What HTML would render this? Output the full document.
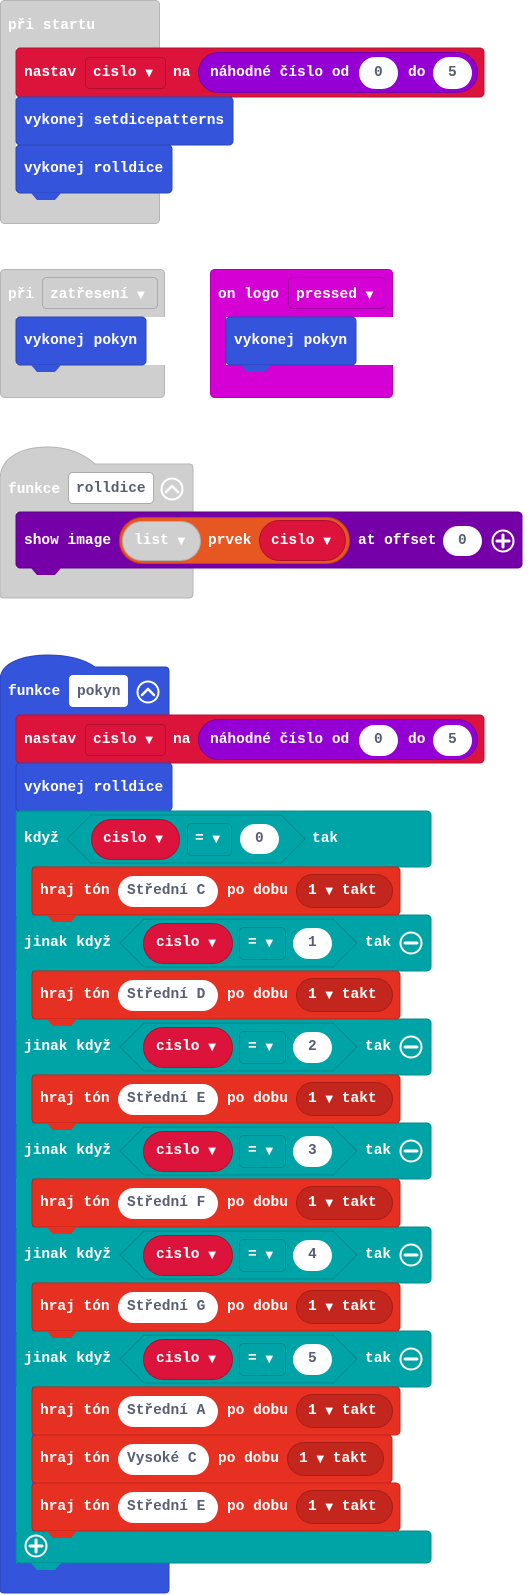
<!DOCTYPE html>
<html><head><meta charset="utf-8"><style>
html,body{margin:0;padding:0;background:#fff;width:530px;height:1595px;overflow:hidden}
svg{display:block}
text{font-family:"Liberation Mono","DejaVu Sans Mono",monospace;font-weight:bold;font-size:14.5px;fill:#fff;dominant-baseline:central}
.d{fill:#575e75}
.tri{font-family:"DejaVu Sans",sans-serif;font-size:10px}
</style></head><body>
<svg width="530" height="1595" viewBox="0 0 530 1595" xmlns="http://www.w3.org/2000/svg">
<!-- Block 1 -->
<g>
<rect x="0.5" y="0.5" width="159" height="223" rx="4" fill="#cfcfcf" stroke="#b5b5b5"/>
<rect x="16" y="48" width="150" height="145" fill="#fff"/>
<text x="8" y="26">při startu</text>
<rect x="16" y="48" width="468" height="49" rx="4" fill="#dc143c" stroke="#b8102f"/>
<rect x="85.5" y="57.5" width="80" height="31" rx="4" fill="#dc143c" stroke="#b0102f"/>
<text x="93" y="73">cislo <tspan class="tri">▼</tspan></text>
<text x="24" y="73">nastav</text>
<text x="173" y="73">na</text>
<rect x="198.5" y="52.5" width="279" height="40" rx="20" fill="#9400d3" stroke="#7500a8"/>
<text x="210" y="73">náhodné číslo od</text>
<rect x="359" y="57" width="39" height="32" rx="16" fill="#fff"/>
<text class="d" x="374" y="73">0</text>
<text x="408" y="73">do</text>
<rect x="433" y="57" width="39" height="32" rx="16" fill="#fff"/>
<text class="d" x="448" y="73">5</text>
<rect x="16" y="97" width="217" height="48" rx="4" fill="#3455db" stroke="#2a45b5"/>
<text x="24" y="121">vykonej setdicepatterns</text>
<rect x="16" y="145" width="156" height="48" rx="4" fill="#3455db" stroke="#2a45b5"/>
<polygon points="31,193 37,200 55,200 61,193" fill="#3455db"/>
<text x="24" y="169">vykonej rolldice</text>
</g>

<!-- Block 2 -->
<g>
<rect x="0.5" y="269.5" width="164" height="128" rx="4" fill="#cfcfcf" stroke="#b5b5b5"/>
<rect x="16" y="317" width="150" height="48" fill="#fff"/>
<text x="8" y="295">při</text>
<rect x="42.5" y="277.5" width="115" height="31" rx="4" fill="#cfcfcf" stroke="#aaa"/>
<text x="50" y="295">zatřesení <tspan class="tri">▼</tspan></text>
<rect x="16" y="317" width="130" height="48" rx="4" fill="#3455db" stroke="#2a45b5"/>
<polygon points="31,365 37,372 55,372 61,365" fill="#3455db"/>
<text x="24" y="341">vykonej pokyn</text>

<rect x="210.5" y="269.5" width="182" height="128" rx="4" fill="#d400d4" stroke="#b000b0"/>
<rect x="226" y="317" width="170" height="48" fill="#fff"/>
<text x="218" y="295">on logo</text>
<rect x="288.5" y="277.5" width="97" height="31" rx="4" fill="#d400d4" stroke="#a000a0"/>
<text x="296" y="295">pressed <tspan class="tri">▼</tspan></text>
<rect x="226" y="317" width="130" height="48" rx="4" fill="#3455db" stroke="#2a45b5"/>
<polygon points="241,365 247,372 265,372 271,365" fill="#3455db"/>
<text x="234" y="341">vykonej pokyn</text>
</g>

<!-- Block 3 -->
<g>
<path d="M0,480 C0,455 25,447 48,447 C70,447 85,455 95,464 L189,464 Q193,464 193,468 L193,594 Q193,598 189,598 L4,598 Q0,598 0,594 Z" fill="#cfcfcf" stroke="#b5b5b5"/>
<rect x="16" y="512" width="200" height="56" fill="#fff"/>
<text x="8" y="490">funkce</text>
<rect x="68.5" y="472.5" width="85" height="31" rx="4" fill="#fff" stroke="#aaa"/>
<text class="d" x="76" y="489">rolldice</text>
<circle cx="172" cy="489" r="10.5" fill="none" stroke="#fff" stroke-width="2"/>
<path d="M166,492 L172,486 L178,492" fill="none" stroke="#fff" stroke-width="2.5" stroke-linecap="round" stroke-linejoin="round"/>
<rect x="16" y="512" width="506" height="56" rx="4" fill="#7600a8" stroke="#5e0088"/>
<polygon points="31,568 37,575 55,575 61,568" fill="#7600a8"/>
<text x="24" y="541">show image</text>
<rect x="119.5" y="517.5" width="230" height="46" rx="23" fill="#e65722" stroke="#c4410f"/>
<rect x="122.5" y="521.5" width="78" height="39" rx="19.5" fill="#cfcfcf" stroke="#b0b0b0"/>
<text x="134" y="541">list <tspan class="tri">▼</tspan></text>
<text x="208" y="541">prvek</text>
<rect x="259.5" y="520.5" width="86" height="40" rx="20" fill="#dc143c" stroke="#b0102f"/>
<text x="271" y="541">cislo <tspan class="tri">▼</tspan></text>
<text x="358" y="541">at offset</text>
<rect x="443" y="526" width="39" height="30" rx="15" fill="#fff"/>
<text class="d" x="458" y="541">0</text>
<circle cx="503" cy="541" r="10.5" fill="none" stroke="#fff" stroke-width="2"/>
<path d="M503,535 V547 M497,541 H509" stroke="#fff" stroke-width="3" stroke-linecap="round"/>
</g>

<!-- Block 4 -->
<g>
<path d="M0,680 C0,662 25,655 48,655 C70,655 85,660 95,667 L165,667 Q169,667 169,671 L169,1589 Q169,1593 165,1593 L4,1593 Q0,1593 0,1589 Z" fill="#3455db" stroke="#2a45b5"/>
<text x="8" y="692">funkce</text>
<rect x="69" y="675" width="59" height="32" rx="4" fill="#fff"/>
<text class="d" x="77" y="692">pokyn</text>
<circle cx="148" cy="692" r="10.5" fill="none" stroke="#fff" stroke-width="2"/>
<path d="M142,695 L148,689 L154,695" fill="none" stroke="#fff" stroke-width="2.5" stroke-linecap="round" stroke-linejoin="round"/>

<rect x="16" y="715" width="468" height="48" rx="4" fill="#dc143c" stroke="#b8102f"/>
<text x="24" y="740">nastav</text>
<rect x="85.5" y="724.5" width="80" height="31" rx="4" fill="#dc143c" stroke="#b0102f"/>
<text x="93" y="740">cislo <tspan class="tri">▼</tspan></text>
<text x="173" y="740">na</text>
<rect x="198.5" y="719.5" width="279" height="40" rx="20" fill="#9400d3" stroke="#7500a8"/>
<text x="210" y="740">náhodné číslo od</text>
<rect x="359" y="725" width="39" height="31" rx="15.5" fill="#fff"/>
<text class="d" x="374" y="740">0</text>
<text x="408" y="740">do</text>
<rect x="433" y="725" width="39" height="31" rx="15.5" fill="#fff"/>
<text class="d" x="448" y="740">5</text>

<rect x="16" y="763" width="156" height="48" rx="4" fill="#3455db" stroke="#2a45b5"/>
<text x="24" y="788">vykonej rolldice</text>

<!-- teal if -->
<rect x="16" y="811" width="16" height="752" fill="#00a4a6"/>
<rect x="16" y="811" width="415" height="56" rx="4" fill="#00a4a6" stroke="#008a8c"/>
<rect x="16" y="915" width="415" height="56" rx="4" fill="#00a4a6" stroke="#008a8c"/>
<rect x="16" y="1019" width="415" height="56" rx="4" fill="#00a4a6" stroke="#008a8c"/>
<rect x="16" y="1123" width="415" height="56" rx="4" fill="#00a4a6" stroke="#008a8c"/>
<rect x="16" y="1227" width="415" height="56" rx="4" fill="#00a4a6" stroke="#008a8c"/>
<rect x="16" y="1331" width="415" height="56" rx="4" fill="#00a4a6" stroke="#008a8c"/>
<rect x="16" y="1531" width="415" height="32" rx="4" fill="#00a4a6" stroke="#008a8c"/>
<rect x="17" y="820" width="15" height="735" fill="#00a4a6"/>
<polygon points="31,1563 37,1570 55,1570 61,1563" fill="#00a4a6"/>
<circle cx="36" cy="1546" r="10.5" fill="none" stroke="#fff" stroke-width="2"/>
<path d="M36,1540 V1552 M30,1546 H42" stroke="#fff" stroke-width="3" stroke-linecap="round"/>

<text x="24" y="839">když</text>
<polygon points="67,839 91,815 281,815 305,839 281,863 91,863" fill="#00a4a6" stroke="#008a8c"/>
<rect x="91.5" y="819.5" width="88" height="40" rx="20" fill="#dc143c" stroke="#b0102f"/>
<text x="103" y="839">cislo <tspan class="tri">▼</tspan></text>
<rect x="187.5" y="823.5" width="44" height="32" rx="4" fill="#00a4a6" stroke="#008a8c"/>
<text x="195" y="839">= <tspan class="tri">▼</tspan></text>
<rect x="240" y="824" width="39" height="30" rx="15" fill="#fff"/>
<text class="d" x="255" y="839">0</text>
<text x="312" y="839">tak</text>

<!-- jinak rows -->
<g id="j1">
<text x="24" y="943">jinak když</text>
<polygon points="120,943 144,919 333,919 357,943 333,967 144,967" fill="#00a4a6" stroke="#008a8c"/>
<rect x="143.5" y="923.5" width="89" height="40" rx="20" fill="#dc143c" stroke="#b0102f"/>
<text x="156" y="943">cislo <tspan class="tri">▼</tspan></text>
<rect x="239.5" y="927.5" width="46" height="32" rx="4" fill="#00a4a6" stroke="#008a8c"/>
<text x="248" y="943">= <tspan class="tri">▼</tspan></text>
<rect x="293" y="928" width="39" height="31" rx="15.5" fill="#fff"/>
<text class="d" x="308" y="943">1</text>
<text x="365" y="943">tak</text>
<circle cx="411" cy="943" r="10.5" fill="none" stroke="#fff" stroke-width="2"/>
<path d="M405,943 H417" stroke="#fff" stroke-width="3" stroke-linecap="round"/>
</g>
<g>
<text x="24" y="1047">jinak když</text>
<polygon points="120,1047 144,1023 333,1023 357,1047 333,1071 144,1071" fill="#00a4a6" stroke="#008a8c"/>
<rect x="143.5" y="1027.5" width="89" height="40" rx="20" fill="#dc143c" stroke="#b0102f"/>
<text x="156" y="1047">cislo <tspan class="tri">▼</tspan></text>
<rect x="239.5" y="1031.5" width="46" height="32" rx="4" fill="#00a4a6" stroke="#008a8c"/>
<text x="248" y="1047">= <tspan class="tri">▼</tspan></text>
<rect x="293" y="1032" width="39" height="31" rx="15.5" fill="#fff"/>
<text class="d" x="308" y="1047">2</text>
<text x="365" y="1047">tak</text>
<circle cx="411" cy="1047" r="10.5" fill="none" stroke="#fff" stroke-width="2"/>
<path d="M405,1047 H417" stroke="#fff" stroke-width="3" stroke-linecap="round"/>
</g>
<g>
<text x="24" y="1151">jinak když</text>
<polygon points="120,1151 144,1127 333,1127 357,1151 333,1175 144,1175" fill="#00a4a6" stroke="#008a8c"/>
<rect x="143.5" y="1131.5" width="89" height="40" rx="20" fill="#dc143c" stroke="#b0102f"/>
<text x="156" y="1151">cislo <tspan class="tri">▼</tspan></text>
<rect x="239.5" y="1135.5" width="46" height="32" rx="4" fill="#00a4a6" stroke="#008a8c"/>
<text x="248" y="1151">= <tspan class="tri">▼</tspan></text>
<rect x="293" y="1136" width="39" height="31" rx="15.5" fill="#fff"/>
<text class="d" x="308" y="1151">3</text>
<text x="365" y="1151">tak</text>
<circle cx="411" cy="1151" r="10.5" fill="none" stroke="#fff" stroke-width="2"/>
<path d="M405,1151 H417" stroke="#fff" stroke-width="3" stroke-linecap="round"/>
</g>
<g>
<text x="24" y="1255">jinak když</text>
<polygon points="120,1255 144,1231 333,1231 357,1255 333,1279 144,1279" fill="#00a4a6" stroke="#008a8c"/>
<rect x="143.5" y="1235.5" width="89" height="40" rx="20" fill="#dc143c" stroke="#b0102f"/>
<text x="156" y="1255">cislo <tspan class="tri">▼</tspan></text>
<rect x="239.5" y="1239.5" width="46" height="32" rx="4" fill="#00a4a6" stroke="#008a8c"/>
<text x="248" y="1255">= <tspan class="tri">▼</tspan></text>
<rect x="293" y="1240" width="39" height="31" rx="15.5" fill="#fff"/>
<text class="d" x="308" y="1255">4</text>
<text x="365" y="1255">tak</text>
<circle cx="411" cy="1255" r="10.5" fill="none" stroke="#fff" stroke-width="2"/>
<path d="M405,1255 H417" stroke="#fff" stroke-width="3" stroke-linecap="round"/>
</g>
<g>
<text x="24" y="1359">jinak když</text>
<polygon points="120,1359 144,1335 333,1335 357,1359 333,1383 144,1383" fill="#00a4a6" stroke="#008a8c"/>
<rect x="143.5" y="1339.5" width="89" height="40" rx="20" fill="#dc143c" stroke="#b0102f"/>
<text x="156" y="1359">cislo <tspan class="tri">▼</tspan></text>
<rect x="239.5" y="1343.5" width="46" height="32" rx="4" fill="#00a4a6" stroke="#008a8c"/>
<text x="248" y="1359">= <tspan class="tri">▼</tspan></text>
<rect x="293" y="1344" width="39" height="31" rx="15.5" fill="#fff"/>
<text class="d" x="308" y="1359">5</text>
<text x="365" y="1359">tak</text>
<circle cx="411" cy="1359" r="10.5" fill="none" stroke="#fff" stroke-width="2"/>
<path d="M405,1359 H417" stroke="#fff" stroke-width="3" stroke-linecap="round"/>
</g>

<!-- hraj rows -->
<g>
<rect x="32" y="867" width="368" height="48" rx="4" fill="#e63022" stroke="#c02418"/>
<polygon points="47,915 53,922 71,922 77,915" fill="#e63022"/>
<text x="40" y="891">hraj tón</text>
<rect x="118" y="876" width="100" height="31" rx="15.5" fill="#fff"/>
<text class="d" x="127" y="891">Střední C</text>
<text x="227" y="891">po dobu</text>
<rect x="296.5" y="874.5" width="96" height="33" rx="16.5" fill="#c3261c" stroke="#a81e15"/>
<text x="308" y="891">1 <tspan class="tri">▼</tspan> takt</text>
</g>
<g>
<rect x="32" y="971" width="368" height="48" rx="4" fill="#e63022" stroke="#c02418"/>
<polygon points="47,1019 53,1026 71,1026 77,1019" fill="#e63022"/>
<text x="40" y="995">hraj tón</text>
<rect x="118" y="980" width="100" height="31" rx="15.5" fill="#fff"/>
<text class="d" x="127" y="995">Střední D</text>
<text x="227" y="995">po dobu</text>
<rect x="296.5" y="978.5" width="96" height="33" rx="16.5" fill="#c3261c" stroke="#a81e15"/>
<text x="308" y="995">1 <tspan class="tri">▼</tspan> takt</text>
</g>
<g>
<rect x="32" y="1075" width="368" height="48" rx="4" fill="#e63022" stroke="#c02418"/>
<polygon points="47,1123 53,1130 71,1130 77,1123" fill="#e63022"/>
<text x="40" y="1099">hraj tón</text>
<rect x="118" y="1084" width="100" height="31" rx="15.5" fill="#fff"/>
<text class="d" x="127" y="1099">Střední E</text>
<text x="227" y="1099">po dobu</text>
<rect x="296.5" y="1082.5" width="96" height="33" rx="16.5" fill="#c3261c" stroke="#a81e15"/>
<text x="308" y="1099">1 <tspan class="tri">▼</tspan> takt</text>
</g>
<g>
<rect x="32" y="1179" width="368" height="48" rx="4" fill="#e63022" stroke="#c02418"/>
<polygon points="47,1227 53,1234 71,1234 77,1227" fill="#e63022"/>
<text x="40" y="1203">hraj tón</text>
<rect x="118" y="1188" width="100" height="31" rx="15.5" fill="#fff"/>
<text class="d" x="127" y="1203">Střední F</text>
<text x="227" y="1203">po dobu</text>
<rect x="296.5" y="1186.5" width="96" height="33" rx="16.5" fill="#c3261c" stroke="#a81e15"/>
<text x="308" y="1203">1 <tspan class="tri">▼</tspan> takt</text>
</g>
<g>
<rect x="32" y="1283" width="368" height="48" rx="4" fill="#e63022" stroke="#c02418"/>
<polygon points="47,1331 53,1338 71,1338 77,1331" fill="#e63022"/>
<text x="40" y="1307">hraj tón</text>
<rect x="118" y="1292" width="100" height="31" rx="15.5" fill="#fff"/>
<text class="d" x="127" y="1307">Střední G</text>
<text x="227" y="1307">po dobu</text>
<rect x="296.5" y="1290.5" width="96" height="33" rx="16.5" fill="#c3261c" stroke="#a81e15"/>
<text x="308" y="1307">1 <tspan class="tri">▼</tspan> takt</text>
</g>
<g>
<rect x="32" y="1387" width="368" height="48" rx="4" fill="#e63022" stroke="#c02418"/>
<text x="40" y="1411">hraj tón</text>
<rect x="118" y="1396" width="100" height="31" rx="15.5" fill="#fff"/>
<text class="d" x="127" y="1411">Střední A</text>
<text x="227" y="1411">po dobu</text>
<rect x="296.5" y="1394.5" width="96" height="33" rx="16.5" fill="#c3261c" stroke="#a81e15"/>
<text x="308" y="1411">1 <tspan class="tri">▼</tspan> takt</text>
</g>
<g>
<rect x="32" y="1435" width="360" height="48" rx="4" fill="#e63022" stroke="#c02418"/>
<text x="40" y="1459">hraj tón</text>
<rect x="118" y="1444" width="91" height="31" rx="15.5" fill="#fff"/>
<text class="d" x="127" y="1459">Vysoké C</text>
<text x="218" y="1459">po dobu</text>
<rect x="287.5" y="1442.5" width="96" height="33" rx="16.5" fill="#c3261c" stroke="#a81e15"/>
<text x="299" y="1459">1 <tspan class="tri">▼</tspan> takt</text>
</g>
<g>
<rect x="32" y="1483" width="368" height="48" rx="4" fill="#e63022" stroke="#c02418"/>
<polygon points="47,1531 53,1538 71,1538 77,1531" fill="#e63022"/>
<text x="40" y="1507">hraj tón</text>
<rect x="118" y="1492" width="100" height="31" rx="15.5" fill="#fff"/>
<text class="d" x="127" y="1507">Střední E</text>
<text x="227" y="1507">po dobu</text>
<rect x="296.5" y="1490.5" width="96" height="33" rx="16.5" fill="#c3261c" stroke="#a81e15"/>
<text x="308" y="1507">1 <tspan class="tri">▼</tspan> takt</text>
</g>
</g>
</svg>
</body></html>
